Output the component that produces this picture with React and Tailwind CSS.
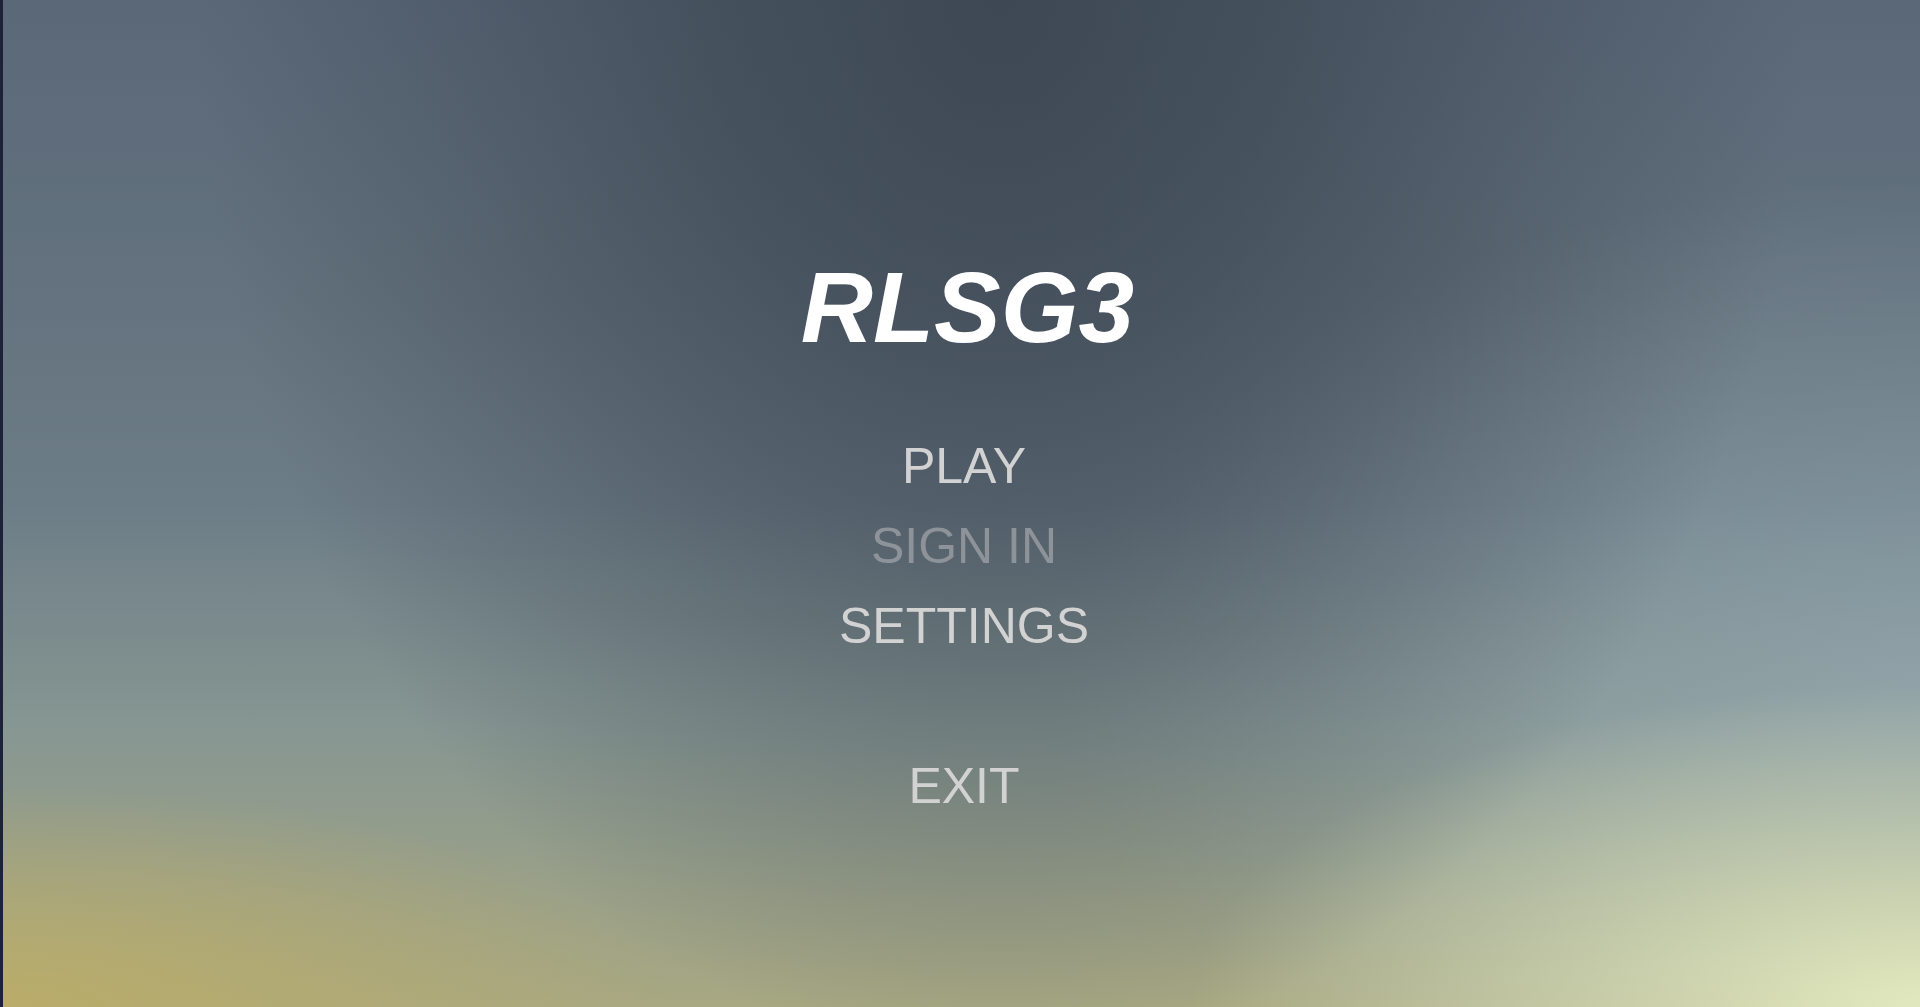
export default function App() {
  const items = [
    { label: 'PLAY', dim: false },
    { label: 'SIGN IN', dim: true },
    { label: 'SETTINGS', dim: false },
  ]

  return (
    <div className="flex h-screen w-full overflow-hidden font-['Liberation_Sans',Arial,sans-serif]">
      {/* thin dark window edge */}
      <div className="w-[3px] shrink-0 bg-[#1c2238]" />

      {/* sky backdrop */}
      <div className="flex flex-1 flex-col items-center pl-[5px] bg-[radial-gradient(ellipse_42%_105%_at_52%_0%,rgba(60,70,82,0.95)_0%,rgba(60,70,82,0.7)_35%,rgba(60,70,82,0.3)_70%,rgba(60,70,82,0)_100%),radial-gradient(ellipse_38%_32%_at_100%_100%,rgba(226,232,190,1),rgba(226,232,190,0.5)_50%,rgba(226,232,190,0)_100%),radial-gradient(ellipse_35%_22%_at_0%_100%,rgba(186,172,105,1),rgba(186,172,105,0)_100%),radial-gradient(ellipse_45%_50%_at_100%_68%,rgba(156,176,186,0.55),rgba(156,176,186,0)_100%),linear-gradient(to_bottom,#5a6878_0%,#64737f_30%,#6d7d87_50%,#869692_72%,#a8a882_100%)]">
        <h1 className="pt-[257px] pl-[7px] text-[100px] leading-none font-bold italic text-white">
          RLSG3
        </h1>

        <nav className="mt-[69px] flex flex-col items-center">
          {items.map((item) => (
            <button
              key={item.label}
              className={
                item.dim
                  ? 'h-[80px] text-[50px] leading-[80px] text-[#8d9399]'
                  : 'h-[80px] text-[50px] leading-[80px] text-[#d2d2d2]'
              }
            >
              {item.label}
            </button>
          ))}
          <div className="h-[80px]" />
          <button className="h-[80px] text-[50px] leading-[80px] text-[#d2d2d2]">EXIT</button>
        </nav>
      </div>
    </div>
  )
}
